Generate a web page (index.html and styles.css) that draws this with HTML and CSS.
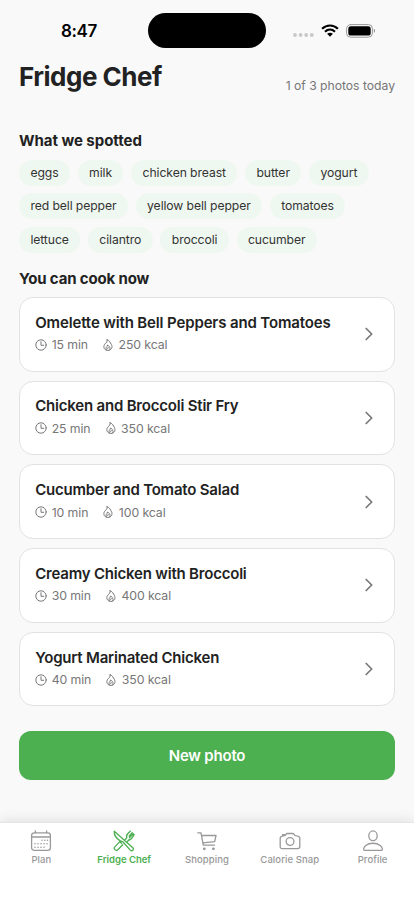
FILE: index.html
```html
<!DOCTYPE html>
<html lang="en">
<head>
<meta charset="utf-8">
<meta name="viewport" content="width=device-width, initial-scale=1">
<title>Fridge Chef</title>
<link rel="stylesheet" href="styles.css">
</head>
<body>
<svg class="sprite" aria-hidden="true">
  <symbol id="clock" viewBox="0 0 12 12"><circle cx="6" cy="6" r="5.2"/><path d="M6 2.7V6.3H8.7"/></symbol>
  <symbol id="flame" viewBox="0 0 12 12"><path d="M5.2.7C5.7 3 3.9 3.7 2.7 5.3C.8 8 2.3 11.4 5.9 11.4S11 8 9.3 5.3C8.4 3.8 7.7 1.7 5.2.7ZM4.3 11C2.9 8.8 5.2 8 5.6 6C7.4 6.8 9.1 9.4 7.5 11M5.2 9.4L6.4 8.8"/></symbol>
  <symbol id="chevron" viewBox="0 0 8 14"><path d="M1.2 1.5L6.7 7L1.2 12.5"/></symbol>
</svg>
<div class="screen">
  <div class="status">
    <span class="time">8:47</span>
    <span class="island"></span>
    <span class="signals">
      <svg class="dots" viewBox="0 0 21 4"><circle cx="2" cy="2" r="1.9"/><circle cx="7.6" cy="2" r="1.9"/><circle cx="13.2" cy="2" r="1.9"/><circle cx="18.8" cy="2" r="1.9"/></svg>
      <svg class="wifi" viewBox="0 0 18 13"><path d="M1.1 4.7C5.6.4 12.4.4 16.9 4.7M4 7.7C6.9 5 11.1 5 14 7.7"/><path class="solid" d="M6.1 9.7C7.8 8.3 10.2 8.3 11.9 9.7L9 12.7Z"/></svg>
      <svg class="battery" viewBox="0 0 30 14"><rect class="shell" x=".6" y=".6" width="25.8" height="12.6" rx="4"/><rect x="2.3" y="2.3" width="22.4" height="9.2" rx="2.6"/><path class="tip" d="M27.8 4.7C29.6 5.4 29.6 8.2 27.8 8.9Z"/></svg>
    </span>
  </div>
  <main>
    <header><h1>Fridge Chef</h1><span class="quota">1 of 3 photos today</span></header>
    <h2 class="spotted">What we spotted</h2>
    <div class="chips">
      <span>eggs</span><span>milk</span><span>chicken breast</span><span>butter</span><span>yogurt</span><span>red bell pepper</span><span>yellow bell pepper</span><span>tomatoes</span><span>lettuce</span><span>cilantro</span><span>broccoli</span><span>cucumber</span>
    </div>
    <h2 class="cook">You can cook now</h2>
    <div class="recipes">
      <article><div><h3 class="long">Omelette with Bell Peppers and Tomatoes</h3><p><svg><use href="#clock"/></svg><span>15 min</span><svg><use href="#flame"/></svg><span>250 kcal</span></p></div><svg class="chevron"><use href="#chevron"/></svg></article>
      <article><div><h3>Chicken and Broccoli Stir Fry</h3><p><svg><use href="#clock"/></svg><span>25 min</span><svg><use href="#flame"/></svg><span>350 kcal</span></p></div><svg class="chevron"><use href="#chevron"/></svg></article>
      <article><div><h3>Cucumber and Tomato Salad</h3><p><svg><use href="#clock"/></svg><span>10 min</span><svg><use href="#flame"/></svg><span>100 kcal</span></p></div><svg class="chevron"><use href="#chevron"/></svg></article>
      <article><div><h3>Creamy Chicken with Broccoli</h3><p><svg><use href="#clock"/></svg><span>30 min</span><svg><use href="#flame"/></svg><span>400 kcal</span></p></div><svg class="chevron"><use href="#chevron"/></svg></article>
      <article><div><h3>Yogurt Marinated Chicken</h3><p><svg><use href="#clock"/></svg><span>40 min</span><svg><use href="#flame"/></svg><span>350 kcal</span></p></div><svg class="chevron"><use href="#chevron"/></svg></article>
    </div>
    <button>New photo</button>
  </main>
  <nav>
    <a><svg viewBox="0 0 22 22"><rect x="1.6" y="2.8" width="18.8" height="17.6" rx="2.6"/><path d="M1.6 7H20.4M5.4 1V2.8M16.6 1V2.8"/><path class="days" d="M12 10.3h.01M14.8 10.3h.01M17.5 10.3h.01M5 13.8h.01M8 13.8h.01M11 13.8h.01M14 13.8h.01M17 13.8h.01M5 17.2h.01M8 17.2h.01M11 17.2h.01M14 17.2h.01"/></svg>Plan</a>
    <a class="active"><svg viewBox="0 0 22 22"><path d="M1.3 1.3C1 4.4 3.2 8.1 6.5 10.4C7.8 11.3 8.9 11.2 9.8 11.7L17.3 20.1C19.1 21.8 21.5 19.4 19.8 17.7L1.3 1.3ZM8.6 13.3L6.6 11.9L1.8 16.9C.2 18.6 2.9 21.6 4.8 19.8L9.7 14.8M12 9.8L13.8 7.9C12.6 5.4 14.5 3.8 17.5 1.1M14 12.1L15.7 10C18.3 10.2 19.3 7.6 21.1 4.6M16.2 6L19.2 2.8M16.4 7.8L20.3 3.8"/></svg>Fridge Chef</a>
    <a><svg viewBox="0 0 22 22"><path d="M1.8 2.8H5L7.3 15.2H18.4M5.5 5.5H20L18.7 11.7L6.7 12.9"/><circle class="wheel" cx="8.3" cy="18.8" r="1.4"/><circle class="wheel" cx="17.4" cy="18.8" r="1.4"/></svg>Shopping</a>
    <a><svg viewBox="0 0 22 22"><path d="M1.2 8C1.2 6.4 2 6 5.7 5.6C6.8 5.4 6.9 3.5 8.3 3.5H13.7C15.1 3.5 15.2 5.4 16.3 5.6C20 6 20.8 6.4 20.8 8V16.6Q20.8 18.6 18.8 18.6H3.2Q1.2 18.6 1.2 16.6ZM3.6 5.5V4.7H5.4"/><circle cx="11" cy="11.5" r="3.9"/></svg>Calorie Snap</a>
    <a><svg viewBox="0 0 22 22"><ellipse cx="11" cy="5.8" rx="4.2" ry="4.9"/><path d="M2.6 20.4C.7 20.4 1.8 17.2 3.8 15.5C7.5 12.5 14.5 12.5 18.2 15.5C20.2 17.2 21.3 20.4 19.4 20.4Z"/></svg>Profile</a>
  </nav>
</div>
</body>
</html>
```
FILE: styles.css
```css
* { box-sizing: border-box; }
body { margin: 0; background: #f9f9f9; color: #222; font-family: Inter, "Liberation Sans", sans-serif; }
h1, h2, h3, p { margin: 0; }
svg { fill: none; stroke: currentColor; stroke-linecap: round; stroke-linejoin: round; flex: none; }
.sprite { display: none; }
.screen { height: 900px; display: flex; flex-direction: column; overflow: hidden; }
.status { height: 62px; display: grid; grid-template-columns: 148px 118px 1fr; align-items: start; color: #000; }
.time { padding: 20px 0 0 61px; font-size: 17px; line-height: 22px; font-weight: 600; letter-spacing: -.4px; }
.island { height: 35px; margin-top: 13px; border-radius: 18px; background: #000; }
.signals { display: flex; align-items: center; padding: 23.5px 0 0 27px; }
.signals svg { stroke: none; fill: #000; }
.signals .dots { width: 21px; height: 4px; fill: #c8c8c8; margin: 9px 7px 0 0; }
.signals .wifi { width: 18px; height: 13px; margin-right: 7px; }
.wifi path { fill: none; stroke: #000; stroke-width: 2.2; stroke-linecap: butt; }
.wifi .solid { fill: #000; stroke: none; }
.battery { width: 30px; height: 14px; }
.signals .battery .shell { fill: none; stroke: #999; }
.battery .tip { fill: #999; }
main { flex: 1; padding: 0 19px; }
header { height: 38px; display: flex; justify-content: space-between; }
h1 { font-size: 26px; line-height: 30px; font-weight: 700; letter-spacing: -.5px; }
.quota { font-size: 12.2px; line-height: 16px; color: #777; padding-top: 15.5px; letter-spacing: -.02px; }
h2 { font-size: 15px; line-height: 20px; font-weight: 700; letter-spacing: -.15px; }
.spotted { margin-top: 31px; letter-spacing: -.04px; }
.chips { display: flex; flex-wrap: wrap; gap: 7.5px 7.8px; margin-top: 8.5px; }
.chips span { height: 26px; padding: 0 11.4px; border-radius: 13px; background: #eff8f0; color: #333; font-size: 12.2px; line-height: 26px; letter-spacing: -.09px; }
.cook { margin-top: 16px; }
.recipes { display: flex; flex-direction: column; gap: 9.2px; margin-top: 8.5px; }
article { height: 74.5px; display: flex; align-items: center; justify-content: space-between; padding: 0 21px 0 15.2px; border: 1px solid #e2e2e2; border-radius: 14px; background: #fff; }
article > div { padding-bottom: 2px; }
h3 { font-size: 15px; line-height: 20px; font-weight: 600; letter-spacing: -.2px; }
h3.long { letter-spacing: -.14px; }
article p { display: flex; align-items: center; margin-top: 3px; height: 18px; font-size: 12.3px; letter-spacing: -.1px; color: #777; }
article p svg { width: 12px; height: 12px; margin-right: 4.5px; }
article p span + svg { margin-left: 14px; margin-right: 4.5px; }
article .chevron { width: 8px; height: 14px; color: #777; stroke-width: 1.7; }
button { display: block; width: 100%; height: 49px; margin-top: 24.5px; border: 0; border-radius: 12px; background: #4caf50; color: #fff; font: 600 15px/49px Inter, "Liberation Sans", sans-serif; letter-spacing: -.2px; padding: 0; }
nav { height: 78px; display: grid; grid-template-columns: repeat(5, 1fr); background: #fff; border-top: 1px solid #e5e5e5; box-shadow: 0 -2px 12px rgba(0, 0, 0, .1); color: #999; }
nav a { display: flex; flex-direction: column; align-items: center; padding-top: 6.5px; font-size: 9.5px; line-height: 12px; font-weight: 500; letter-spacing: .08px; }
nav svg { width: 22px; height: 22px; margin-bottom: 2px; stroke-width: 1.3; }
nav .active { color: #4caf50; font-weight: 600; letter-spacing: 0; }
.days { stroke-width: 1.6; }
.wheel { fill: currentColor; stroke: none; }
```
